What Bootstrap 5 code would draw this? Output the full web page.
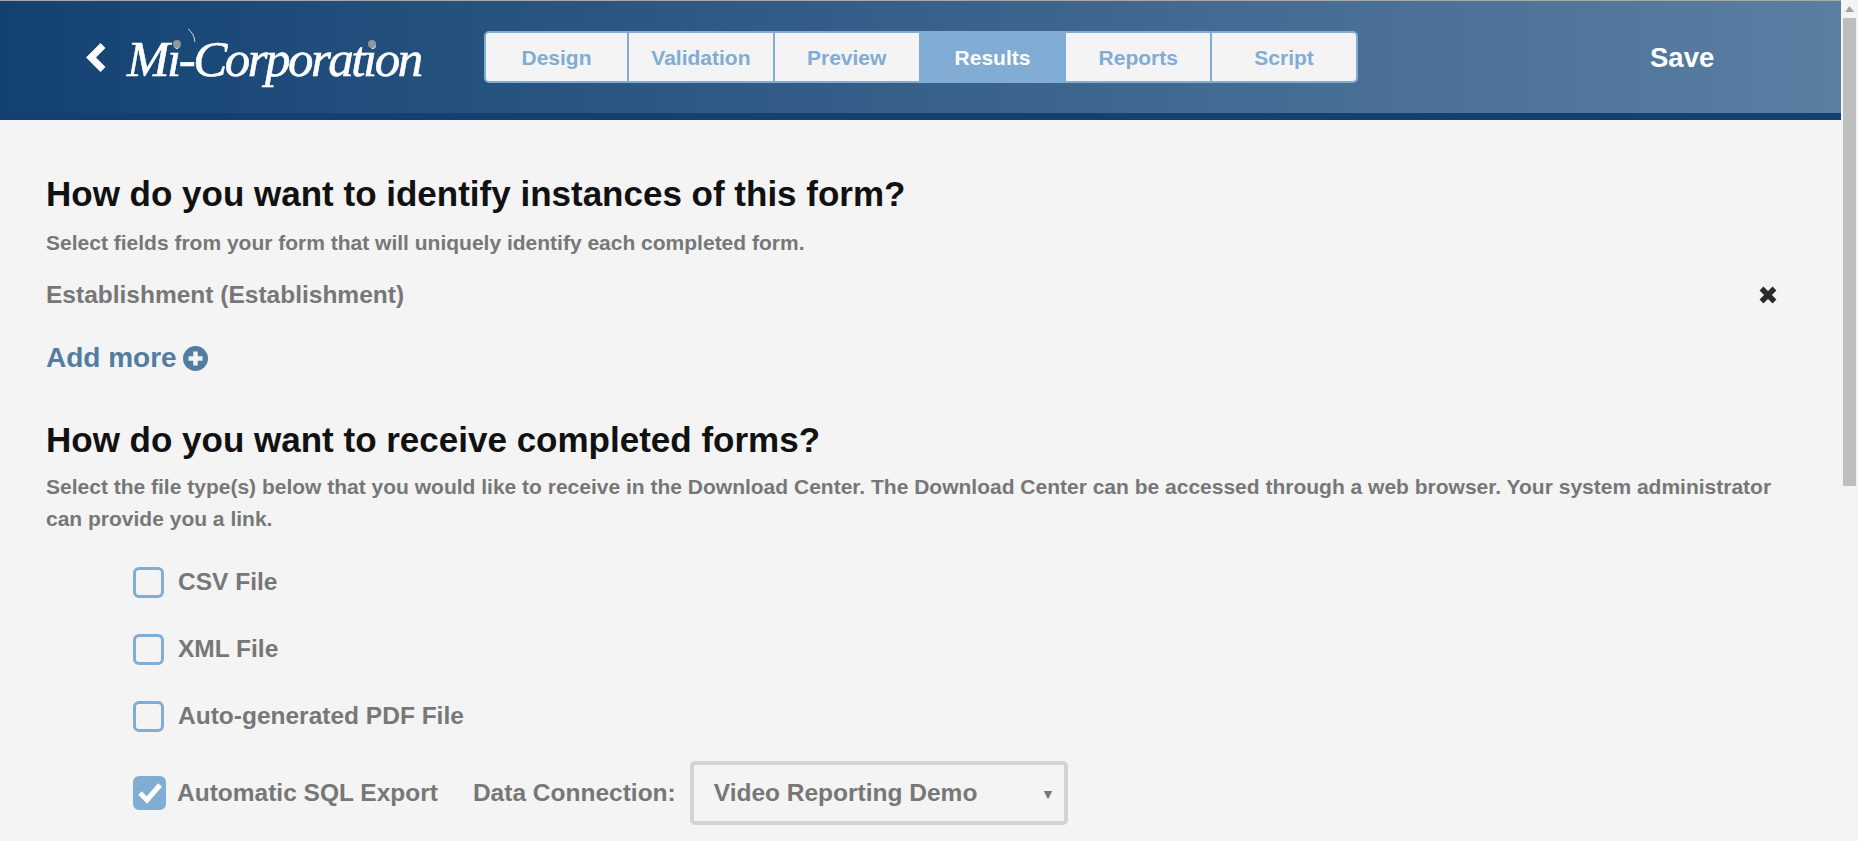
<!DOCTYPE html>
<html lang="en">
<head>
<meta charset="utf-8">
<title>Results</title>
<link rel="stylesheet" href="https://cdn.jsdelivr.net/npm/bootstrap@5.3.0/dist/css/bootstrap.min.css">
<style>
html,body{height:841px;overflow:hidden}
body{background:#f4f4f4;font-family:"Liberation Sans",Arial,sans-serif;color:#777;font-weight:700}
.page-shell{height:841px}
.page-main{min-width:0}
.top-line{height:1px;background:#a9a9a9}
.app-header{height:119px;background:linear-gradient(to right,#134272,#5b7fa3);border-bottom:7px solid #153f70;padding-left:86px}
.back-chev{width:21px;height:29px;flex:none}
.logo-box{position:relative;width:241px;margin-left:20px;padding-top:4px;flex:none}
.logo-txt{font-family:"Liberation Serif",serif;font-style:italic;font-weight:400;font-size:51px;letter-spacing:-2.500px;color:#fff;line-height:50px;white-space:nowrap;display:block;-webkit-text-stroke:.6px #fff}
.logo-arc{position:absolute;left:59px;top:-2px}
.logo-dot{position:absolute;width:8px;height:8px;border-radius:50%;background:#8f969e;top:10px}
.dot-a{left:46px}
.dot-b{left:241px}
.tab-bar{width:874px;height:52px;margin-left:116px;border:2px solid #81acd3;border-radius:5px;background:#f4f4f4;overflow:hidden;flex:none}
.tab-item{flex:1 1 0;display:flex;align-items:center;justify-content:center;color:#81acd3;font-size:21px;border-right:2px solid #81acd3;padding-top:1px}
.tab-item:first-child{flex:0 0 143px}
.tab-item:last-child{border-right:0}
.tab-item.on{background:#81acd3;color:#fff;border-right-color:#81acd3}
.save-txt{color:#fff;font-size:27.500px;position:absolute;left:1650px;top:42px;line-height:32px}
.content-wrap{padding:54px 0 0 46px;width:1795px}
.sect-title{font-size:35px;line-height:40px;font-weight:700;color:#111;margin:0}
.sect-note{font-size:21px;line-height:32px;color:#777;margin:13px 0 0;max-width:1745px}
.note-two{margin-top:11px}
.field-row{font-size:24.500px;line-height:32px;margin-top:20px;padding-right:17px}
.add-more{font-size:28px;line-height:36px;color:#537ca2;margin-top:29px;gap:6px}
.title-two{margin-top:44px}
.check-list{padding-left:87px;margin-top:14px}
.check-row{font-size:24.500px;height:67px}
.check-box{width:31px;height:31px;border:3px solid #81acd3;border-radius:6px;margin-right:14px;flex:none}
.check-box.done{width:33px;height:34px;background:#81acd3;margin-right:11px;display:flex;align-items:center;justify-content:center}
.sql-row{height:64px;margin-top:11px}
.conn-label{margin-left:35px;margin-right:14px}
.select-box{width:378px;height:64px;border:4px solid #d3d3d3;border-radius:5px;padding:0 0 0 20px;position:relative}
.select-arrow{position:absolute;right:9px;top:19px;font-size:14px}
.fake-scroll{width:17px;background:#f4f4f4;padding:0 2px;flex:none}
.scroll-up{height:18px}
.scroll-thumb{height:468px;background:#bebebe}
</style>
</head>
<body>
<div class="page-shell d-flex">
  <div class="page-main flex-grow-1 position-relative">
    <div class="top-line"></div>
    <header class="app-header d-flex align-items-center">
      <svg class="back-chev" viewBox="0 0 21 29"><path d="M17 2.500L5 14.500L17 26.500" fill="none" stroke="#fff" stroke-width="7"/></svg>
      <div class="logo-box">
        <span class="logo-txt">Mi-Corporation</span>
        <svg class="logo-arc" width="14" height="18" viewBox="0 0 14 18"><path d="M2 1Q8 5 9 14" fill="none" stroke="#cfd8e2" stroke-width="1"/></svg>
        <span class="logo-dot dot-a"></span>
        <span class="logo-dot dot-b"></span>
      </div>
      <nav class="tab-bar d-flex">
        <div class="tab-item">Design</div>
        <div class="tab-item">Validation</div>
        <div class="tab-item">Preview</div>
        <div class="tab-item on">Results</div>
        <div class="tab-item">Reports</div>
        <div class="tab-item">Script</div>
      </nav>
      <div class="save-txt">Save</div>
    </header>
    <main class="content-wrap">
      <h2 class="sect-title">How do you want to identify instances of this form?</h2>
      <p class="sect-note">Select fields from your form that will uniquely identify each completed form.</p>
      <div class="field-row d-flex justify-content-between align-items-center">
        <span>Establishment (Establishment)</span>
        <svg width="20" height="20" viewBox="0 0 20 20"><path d="M3.500 3.500L16.500 16.500M16.500 3.500L3.500 16.500" stroke="#2b2b2b" stroke-width="5.500" fill="none"/></svg>
      </div>
      <div class="add-more d-flex align-items-center">
        <span>Add more</span>
        <svg width="25" height="25" viewBox="0 0 25 25"><circle cx="12.500" cy="12.500" r="12.500" fill="#537ca2"/><path d="M12.500 5.500V19.500M5.500 12.500H19.500" stroke="#f4f4f4" stroke-width="4.500"/></svg>
      </div>
      <h2 class="sect-title title-two">How do you want to receive completed forms?</h2>
      <p class="sect-note note-two">Select the file type(s) below that you would like to receive in the Download Center. The Download Center can be accessed through a web browser. Your system administrator can provide you a link.</p>
      <div class="check-list">
        <div class="check-row d-flex align-items-center"><span class="check-box"></span>CSV File</div>
        <div class="check-row d-flex align-items-center"><span class="check-box"></span>XML File</div>
        <div class="check-row d-flex align-items-center"><span class="check-box"></span>Auto-generated PDF File</div>
        <div class="check-row sql-row d-flex align-items-center">
          <span class="check-box done"><svg width="26" height="24" viewBox="0 0 26 24"><path d="M3 12L10 19L23 4" fill="none" stroke="#fff" stroke-width="5"/></svg></span>
          <span>Automatic SQL Export</span>
          <span class="conn-label">Data Connection:</span>
          <div class="select-box d-flex align-items-center">Video Reporting Demo<span class="select-arrow">▼</span></div>
        </div>
      </div>
    </main>
  </div>
  <aside class="fake-scroll">
    <div class="scroll-up d-flex justify-content-center align-items-center"><svg width="9" height="6" viewBox="0 0 9 6"><path d="M4.500 0L9 6H0Z" fill="#a3a3a3"/></svg></div>
    <div class="scroll-thumb"></div>
  </aside>
</div>
<script src="https://cdn.jsdelivr.net/npm/bootstrap@5.3.0/dist/js/bootstrap.bundle.min.js"></script>
</body>
</html>
